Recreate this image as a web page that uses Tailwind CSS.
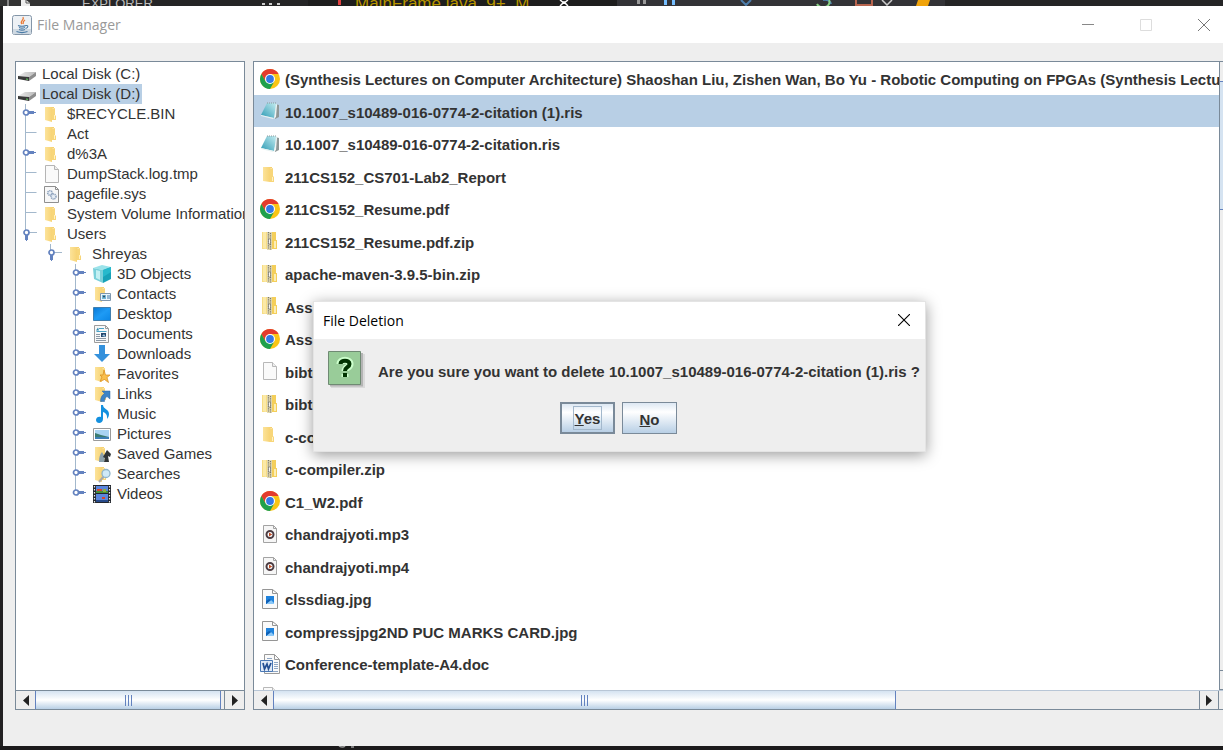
<!DOCTYPE html>
<html lang="en">
<head>
<meta charset="utf-8">
<title>File Manager</title>
<script src="https://cdn.jsdelivr.net/npm/@tailwindcss/browser@4"></script>
</head>
<body class="flex h-screen flex-col overflow-hidden bg-[#222122] font-['Liberation_Sans',Arial,sans-serif] text-[15px] text-[#333333]">

<svg class="absolute size-0" aria-hidden="true">
  <defs>
    <linearGradient id="gf" x1="0" x2="1"><stop offset="0" stop-color="#fce39a"/><stop offset="1" stop-color="#f6cf6a"/></linearGradient>
    <linearGradient id="gd" x1="0" x2="1" y1="0" y2="1"><stop offset="0" stop-color="#0a78d4"/><stop offset=".5" stop-color="#1e9bf5"/><stop offset="1" stop-color="#0b86e6"/></linearGradient>
    <linearGradient id="gn" x1="1" x2="0" y1="0" y2="1"><stop offset="0" stop-color="#c8eef2"/><stop offset="1" stop-color="#2d9bb4"/></linearGradient>
    <linearGradient id="gk" x1="0" x2="1"><stop offset="0" stop-color="#ececec"/><stop offset="1" stop-color="#b9b9b9"/></linearGradient>
    <symbol id="folder" viewBox="0 0 18 18"><path d="M2 2h9v1l-2 1v13l-7-2z" fill="url(#gf)"/><path d="M9 4l3-1v7l1 1v4H9z" fill="#f8d679"/><path d="M11 10h1v4h-1z" fill="#fff1c2"/></symbol>
    <symbol id="disk" viewBox="0 0 18 18"><path d="M0 11l7-4h11l-7 5z" fill="url(#gk)"/><path d="M0 11l11 1v4L0 14z" fill="#3a3a3a"/><path d="M11 12l7-5v4l-7 5z" fill="#8d8d8d"/><path d="M8 14l2 .3" stroke="#5fd35f"/></symbol>
    <symbol id="page" viewBox="0 0 18 18"><path d="M2.500.500h9l4 4v13h-13z" fill="#fafafa" stroke="#b5b5b5"/><path d="M11.500.500v4h4" fill="#eee" stroke="#b5b5b5"/></symbol>
    <symbol id="sys" viewBox="0 0 18 18"><path d="M1.500 1.500h11l3 3v13h-14z" fill="#f7f7f7" stroke="#8f8f8f"/><path d="M12.500 1.500v3h3" fill="none" stroke="#8f8f8f"/><circle cx="7" cy="8" r="2.300" fill="#e6edf5" stroke="#8fa3bd" stroke-width="1.600" stroke-dasharray="1.200 .6"/><circle cx="10.500" cy="11.500" r="2.500" fill="#e6edf5" stroke="#8fa3bd" stroke-width="1.600" stroke-dasharray="1.200 .6"/></symbol>
    <symbol id="cube" viewBox="0 0 18 18"><path d="M0 3l9-3 9 2-8 3z" fill="#9be3ea"/><path d="M0 3l10 2v13L1 14z" fill="#7ad0da"/><path d="M10 5l8-3v12l-8 4z" fill="#17a2b8"/><path d="M3 5l4 1v9l-4-2z" fill="#c3f0f3"/><path d="M10 5l8-3v5l-8 5z" fill="#27b9cc"/></symbol>
    <symbol id="contacts" viewBox="0 0 18 18"><use href="#folder"/><path d="M7.500 8.500h10v7h-10z" fill="#eaf4fb" stroke="#7f97ad"/><path d="M9 10h4v4H9z" fill="#6fb7d8"/><circle cx="11" cy="11.500" r="1" fill="#345"/><path d="M14 11h3M14 13h3" stroke="#3c78a8"/></symbol>
    <symbol id="desktop" viewBox="0 0 18 18"><path d="M.5 2.500h17v13H.5z" fill="url(#gd)" stroke="#3f7fb0"/></symbol>
    <symbol id="documents" viewBox="0 0 18 18"><path d="M1.500.500h11l3 3v14h-14z" fill="#f8f8f8" stroke="#9c9c9c"/><path d="M12.500.500v3h3" fill="none" stroke="#9c9c9c"/><path d="M6 3.500h5M3.500 6.500h10" stroke="#4aa3c7"/><path d="M3 5.500l2-3 1 3z" fill="#2d88ad"/><path d="M3 9.500h4M3 11.500h4M3 13.500h10M3 15.500h10" stroke="#8b98a5"/><path d="M8 8h5v4H8z" fill="#25476e"/><path d="M9 11l2-2 2 3z" fill="#9fc7df"/></symbol>
    <symbol id="downloads" viewBox="0 0 18 18"><path d="M6 0h6v9h5l-8 8-8-8h5z" fill="#3591dc"/></symbol>
    <symbol id="favorites" viewBox="0 0 18 18"><use href="#folder"/><path d="M11 5l1.500 5h4.500l-3 2.500 1.500 5-4-3-4.500 2 2-4.500-2-2h3z" fill="#f9bf4d" stroke="#d98b1b" stroke-width=".7"/></symbol>
    <symbol id="links" viewBox="0 0 18 18"><use href="#folder"/><path d="M9 6h8v8l-3-2.500c-2 1-2.500 3-2.500 5H7.500c0-4 1.500-6.500 4-8z" fill="#3c84c6" stroke="#2a66a3" stroke-width=".5"/></symbol>
    <symbol id="music" viewBox="0 0 18 18"><path d="M8 0h2c0 4 6 4 6 9 0 2-1 4-2 5 .5-4-1-6-4-7v7c0 5-7 5-7 1 0-3 3-4 5-3z" fill="#1490df"/></symbol>
    <symbol id="pictures" viewBox="0 0 18 18"><path d="M.5 3.500h17v12H.5z" fill="#fff" stroke="#9a9a9a"/><path d="M2 5h14v9H2z" fill="#a9d4f2"/><path d="M2 8l6 2 8 2v2H2z" fill="#3b7c70"/><path d="M2 12h14v2H2z" fill="#3c7fb5"/></symbol>
    <symbol id="games" viewBox="0 0 18 18"><use href="#folder"/><path d="M9 7l3 5-1 5H6c0-5 1-8 3-10z" fill="#8ba0ab"/><path d="M14 5l4 4-1 3-2-1 1 6h-5l1-4-2-1z" fill="#2f3436"/></symbol>
    <symbol id="searches" viewBox="0 0 18 18"><use href="#folder"/><path d="M11 11l-5 6" stroke="#a9a9a9" stroke-width="2"/><circle cx="13" cy="8.500" r="4" fill="#cfe9f7" stroke="#8fb5cc" stroke-width="1.300"/></symbol>
    <symbol id="videos" viewBox="0 0 18 18"><path d="M0 0h18v18H0z" fill="#23272e"/><path d="M3 1h12v7H3zM3 9h12v8H3z" fill="#5b86dd"/><path d="M3 6h12v2H3z" fill="#44913a"/><path d="M4 4h5v2H4zM9 12h3v2H9z" fill="#d9452b"/><path d="M10 4h3v3h-3z" fill="#8fae3a"/><path d="M3 15h12v2H3z" fill="#274a8a"/><path d="M1.500 1v17M16.500 1v17" stroke="#e9e9e9" stroke-width="1.200" stroke-dasharray="1.500 1.500"/></symbol>
    <symbol id="chrome" viewBox="0 0 20 20"><circle cx="10" cy="10" r="10" fill="#f9c515"/><path d="M1.340 5A10 10 0 0 1 18.660 5H10L5.670 12.500z" fill="#e33b2e"/><path d="M1.340 5A10 10 0 0 0 10 20l4.330-7.500L10 10l-4.330 2.500z" fill="#1fa04d"/><circle cx="10" cy="10" r="5" fill="#fff"/><circle cx="10" cy="10" r="3.900" fill="#3478e5"/></symbol>
    <symbol id="note" viewBox="0 0 20 20"><path d="M15 3l4 1v12l-4 2z" fill="#8f9796"/><path d="M7 2h8l2 1-3 14-13-3z" fill="url(#gn)"/><path d="M16 3l1 1-1 12-2 2z" fill="#eef4f4"/><path d="M1 14l13 3-1 1-12-3z" fill="#e8f2f2"/><path d="M7 2h9" stroke="#8d9a9c" stroke-dasharray="1 1"/></symbol>
    <symbol id="zip" viewBox="0 0 20 20"><path d="M2 1h6v17H2z" fill="#f7dc82"/><path d="M3 1h3v17l-3-1z" fill="#fbe9a8"/><path d="M12 1h4v8h1v9h-5z" fill="#f4cf5b"/><path d="M14 10h2v7h-2z" fill="#fcedb5"/><path d="M7 1h5v18H7z" fill="#e2d9b0"/><path d="M8.500 1v17M10.500 2v17" stroke="#7c796b" stroke-width="1.200" stroke-dasharray="1.200 1"/><path d="M8.500 8h2v5h-2z" fill="#f4f4f4" stroke="#66645c" stroke-width=".6"/></symbol>
    <symbol id="lfolder" viewBox="0 0 20 20"><path d="M3 1h9v1l-2 1v13l-7-1z" fill="url(#gf)"/><path d="M10 3l3-1v8l1 1v5h-4z" fill="#f8d679"/><path d="M12 11h1v4h-1z" fill="#fff1c2"/></symbol>
    <symbol id="lpage" viewBox="0 0 20 20"><path d="M3.500 1.500h9l4 4v13h-13z" fill="#fafafa" stroke="#b8b8b8"/><path d="M12.500 1.500v4h4" fill="#eee" stroke="#b8b8b8"/></symbol>
    <symbol id="media" viewBox="0 0 20 20"><path d="M3.500 1.500h10l3 3v14h-13z" fill="#f6f6f6" stroke="#a3a3a3"/><path d="M13.500 1.500v3h3" fill="none" stroke="#a3a3a3"/><circle cx="10" cy="10.500" r="3.500" fill="#fff" stroke="#4c3d43" stroke-width="2"/><path d="M9 8.500l3.200 2-3.200 2z" fill="#c04b23"/></symbol>
    <symbol id="jpg" viewBox="0 0 20 20"><path d="M2.500.500h10l5 4v15h-15z" fill="#fafafa" stroke="#959595"/><path d="M12.500.500v4h5" fill="none" stroke="#959595"/><path d="M6 7h8v8H6z" fill="#1f82dc"/><path d="M6 15l5-4 3 3v1z" fill="#8cc8f7"/><path d="M6 12l3-2 2 1-5 4z" fill="#0e5fb5"/></symbol>
    <symbol id="doc" viewBox="0 0 20 20"><path d="M4.500.500h10l5 5v14h-15z" fill="#fafafa" stroke="#9a9a9a"/><path d="M14.500.500v5h5" fill="none" stroke="#9a9a9a"/><path d="M7 4.500h5M14 8.500h4M14 10.500h4M14 12.500h4M14 14.500h4M9 17.500h9" stroke="#8ea6c4"/><path d="M.5 6.500h12v11H.5z" fill="#dfe9f6" stroke="#4b79b5"/><path d="M3 9l1.500 6L7 10l1.500 5L11 9" fill="none" stroke="#234f93" stroke-width="1.700"/></symbol>
    <!-- tree handles and connector lines -->
    <symbol id="line" viewBox="0 0 25 20"><path d="M9.500 0v20M9.500 8.500h11" stroke="#a3b8cc" fill="none"/></symbol>
    <symbol id="closed" viewBox="0 0 25 20"><path d="M9.500 0v20" stroke="#a3b8cc"/><path d="M13 8h7v1h-7z" fill="#6382bf"/><path d="M13 7h5v3h-5z" fill="#6382bf"/><circle cx="10" cy="8.500" r="2.500" fill="#fff" stroke="#6382bf" stroke-width="1.700"/></symbol>
    <symbol id="closedlast" viewBox="0 0 25 20"><path d="M9.500 0v8" stroke="#a3b8cc"/><path d="M13 8h7v1h-7z" fill="#6382bf"/><path d="M13 7h5v3h-5z" fill="#6382bf"/><circle cx="10" cy="8.500" r="2.500" fill="#fff" stroke="#6382bf" stroke-width="1.700"/></symbol>
    <symbol id="open" viewBox="0 0 25 20"><path d="M9.500 0v9M10 8.500h11" stroke="#a3b8cc"/><path d="M9 11h3v5H9z" fill="#6382bf"/><path d="M10 16h1v1h-1z" fill="#6382bf"/><circle cx="10.500" cy="8.500" r="2.500" fill="#fff" stroke="#6382bf" stroke-width="1.700"/></symbol>
  </defs>
</svg>

<!-- editor window peeking out above -->
<div class="flex h-1.5 shrink-0 overflow-hidden bg-[#252526] whitespace-nowrap" aria-hidden="true">
  <svg class="h-1.5 w-[82px] shrink-0" viewBox="0 0 82 6"><path d="M0 0h50v6H0z" fill="#333333"/><path d="M8 0v6" stroke="#ddd"/><path d="M21 0h5l4 3v3h-9z" fill="#eee"/><path d="M26 0v3h4" fill="none" stroke="#555"/></svg>
  <span class="-mt-1 w-[178px] shrink-0 text-[13px] leading-4 text-[#bbbbbb]">EXPLORER</span>
  <svg class="h-1.5 w-[95px] shrink-0" viewBox="0 0 95 6"><path d="M48 0h47v6H48z" fill="#1e1e1e"/><path d="M2 3h3v2H2zM9 3h3v2H9zM17 3h3v2h-3z" fill="#ccc"/><path d="M78 0h3v5h-3z" fill="#e04040"/></svg>
  <span class="-mt-1 w-[200px] shrink-0 bg-[#1e1e1e] text-[17px] leading-4 text-[#b89500]">MainFrame.java&nbsp; 9+, M</span>
  <svg class="h-1.5 w-[400px] shrink-0" viewBox="0 0 400 6"><path d="M0 0h390v6H0z" fill="#333337"/><path d="M0 0h62v6H0z" fill="#1e1e1e"/><path d="M5 6l4-4 4 4M5 0l4 3 4-3" fill="none" stroke="#fff" stroke-width="1.500"/><path d="M82 0h3v4h-3zM88 0h3v4h-3z" fill="#999"/><path d="M109 0h3v5h-3zM117 0h3v5h-3z" fill="#75beff"/><path d="M186 0l5 5 5-5M268 0a6 5 0 0 1 8 4" fill="none" stroke="#4d7dab" stroke-width="2"/><path d="M262 4a6 5 0 0 0 12-4" fill="none" stroke="#89d185" stroke-width="2"/><path d="M301 0v5h16V0" fill="none" stroke="#b8654f" stroke-width="2"/><path d="M327 0l5 5 5-5" fill="none" stroke="#ccc" stroke-width="1.500"/><path d="M363 0h12l-2 6h-12z" fill="#f0a30a"/></svg>
</div>

<main class="ml-[3px] flex min-h-0 flex-1 flex-col bg-[#eeeeee]">
  <header class="flex h-[37px] shrink-0 items-center bg-white pl-[9px] font-['Open_Sans','Noto_Sans',sans-serif]">
    <svg class="size-5" viewBox="0 0 20 20"><rect x=".5" y=".5" width="19" height="19" rx="2" fill="#edf1f5" stroke="#8496a8"/><path d="M1 14h18v5H1z" fill="#cfd9e2"/><path d="M11 2c2 3-4 4-1 7M13 5c-3 2-1 2-2 4" fill="none" stroke="#ea7b38" stroke-width="1.300"/><path d="M6 10.500c2 .8 6 .8 8 0M7 12.500c2 .8 4 .8 6 0M7 14.500c2 .8 4 .8 6 0M4.500 16.500c3 1.200 8 1.200 11 0M14 10.500c2.500-.5 2.500 2-.5 3" fill="none" stroke="#4a7ba6" stroke-width="1.100"/></svg>
    <h1 class="flex-1 pl-[5px] text-[14px] text-[#999999]">File Manager</h1>
    <button class="flex h-full w-[58px] items-center justify-center" aria-label="Minimize"><svg class="size-3" viewBox="0 0 12 12"><path d="M0 5.500h12" stroke="#888"/></svg></button>
    <button class="flex h-full w-[58px] items-center justify-center" aria-label="Maximize" disabled><svg class="size-3" viewBox="0 0 12 12"><path d="M.5.500h11v11H.5z" fill="none" stroke="#dddddd"/></svg></button>
    <button class="flex h-full w-12 items-center justify-center pl-2.5" aria-label="Close"><svg class="size-3.5" viewBox="0 0 14 14"><path d="M1 1l12 12M13 1L1 13" stroke="#777" /></svg></button>
  </header>

  <div class="flex min-h-0 flex-1 gap-2 pt-[18px] pb-9 pl-3">
    <!-- folder tree -->
    <nav class="flex w-[230px] shrink-0 flex-col border border-[#7a8a99] bg-white" aria-label="Folders">
      <ul class="min-h-0 flex-1 overflow-hidden pt-0.5 whitespace-nowrap [&>li]:flex [&>li]:h-5 [&>li]:items-center">
        <li><svg class="ml-0.5 size-[18px] shrink-0"><use href="#disk"/></svg><span class="ml-1 px-0.5">Local Disk (C:)</span></li>
        <li><svg class="ml-0.5 size-[18px] shrink-0"><use href="#disk"/></svg><span class="ml-1 bg-[#b8cfe5] px-0.5 leading-5">Local Disk (D:)</span></li>
        <li><svg class="h-5 w-[25px] shrink-0"><use href="#closed"/></svg><svg class="ml-0.5 size-[18px] shrink-0"><use href="#folder"/></svg><span class="ml-1 px-0.5">$RECYCLE.BIN</span></li>
        <li><svg class="h-5 w-[25px] shrink-0"><use href="#line"/></svg><svg class="ml-0.5 size-[18px] shrink-0"><use href="#folder"/></svg><span class="ml-1 px-0.5">Act</span></li>
        <li><svg class="h-5 w-[25px] shrink-0"><use href="#closed"/></svg><svg class="ml-0.5 size-[18px] shrink-0"><use href="#folder"/></svg><span class="ml-1 px-0.5">d%3A</span></li>
        <li><svg class="h-5 w-[25px] shrink-0"><use href="#line"/></svg><svg class="ml-0.5 size-[18px] shrink-0"><use href="#page"/></svg><span class="ml-1 px-0.5">DumpStack.log.tmp</span></li>
        <li><svg class="h-5 w-[25px] shrink-0"><use href="#line"/></svg><svg class="ml-0.5 size-[18px] shrink-0"><use href="#sys"/></svg><span class="ml-1 px-0.5">pagefile.sys</span></li>
        <li><svg class="h-5 w-[25px] shrink-0"><use href="#line"/></svg><svg class="ml-0.5 size-[18px] shrink-0"><use href="#folder"/></svg><span class="ml-1 px-0.5">System Volume Information</span></li>
        <li><svg class="h-5 w-[25px] shrink-0"><use href="#open"/></svg><svg class="ml-0.5 size-[18px] shrink-0"><use href="#folder"/></svg><span class="ml-1 px-0.5">Users</span></li>
        <li class="pl-[25px]"><svg class="h-5 w-[25px] shrink-0"><use href="#open"/></svg><svg class="ml-0.5 size-[18px] shrink-0"><use href="#folder"/></svg><span class="ml-1 px-0.5">Shreyas</span></li>
        <li class="pl-[50px]"><svg class="h-5 w-[25px] shrink-0"><use href="#closed"/></svg><svg class="ml-0.5 size-[18px] shrink-0"><use href="#cube"/></svg><span class="ml-1 px-0.5">3D Objects</span></li>
        <li class="pl-[50px]"><svg class="h-5 w-[25px] shrink-0"><use href="#closed"/></svg><svg class="ml-0.5 size-[18px] shrink-0"><use href="#contacts"/></svg><span class="ml-1 px-0.5">Contacts</span></li>
        <li class="pl-[50px]"><svg class="h-5 w-[25px] shrink-0"><use href="#closed"/></svg><svg class="ml-0.5 size-[18px] shrink-0"><use href="#desktop"/></svg><span class="ml-1 px-0.5">Desktop</span></li>
        <li class="pl-[50px]"><svg class="h-5 w-[25px] shrink-0"><use href="#closed"/></svg><svg class="ml-0.5 size-[18px] shrink-0"><use href="#documents"/></svg><span class="ml-1 px-0.5">Documents</span></li>
        <li class="pl-[50px]"><svg class="h-5 w-[25px] shrink-0"><use href="#closed"/></svg><svg class="ml-0.5 size-[18px] shrink-0"><use href="#downloads"/></svg><span class="ml-1 px-0.5">Downloads</span></li>
        <li class="pl-[50px]"><svg class="h-5 w-[25px] shrink-0"><use href="#closed"/></svg><svg class="ml-0.5 size-[18px] shrink-0"><use href="#favorites"/></svg><span class="ml-1 px-0.5">Favorites</span></li>
        <li class="pl-[50px]"><svg class="h-5 w-[25px] shrink-0"><use href="#closed"/></svg><svg class="ml-0.5 size-[18px] shrink-0"><use href="#links"/></svg><span class="ml-1 px-0.5">Links</span></li>
        <li class="pl-[50px]"><svg class="h-5 w-[25px] shrink-0"><use href="#closed"/></svg><svg class="ml-0.5 size-[18px] shrink-0"><use href="#music"/></svg><span class="ml-1 px-0.5">Music</span></li>
        <li class="pl-[50px]"><svg class="h-5 w-[25px] shrink-0"><use href="#closed"/></svg><svg class="ml-0.5 size-[18px] shrink-0"><use href="#pictures"/></svg><span class="ml-1 px-0.5">Pictures</span></li>
        <li class="pl-[50px]"><svg class="h-5 w-[25px] shrink-0"><use href="#closed"/></svg><svg class="ml-0.5 size-[18px] shrink-0"><use href="#games"/></svg><span class="ml-1 px-0.5">Saved Games</span></li>
        <li class="pl-[50px]"><svg class="h-5 w-[25px] shrink-0"><use href="#closed"/></svg><svg class="ml-0.5 size-[18px] shrink-0"><use href="#searches"/></svg><span class="ml-1 px-0.5">Searches</span></li>
        <li class="pl-[50px]"><svg class="h-5 w-[25px] shrink-0"><use href="#closedlast"/></svg><svg class="ml-0.5 size-[18px] shrink-0"><use href="#videos"/></svg><span class="ml-1 px-0.5">Videos</span></li>
      </ul>
      <div class="flex h-[19px] shrink-0 border-t border-[#7a8a99] bg-[#eeeeee]">
        <button class="flex w-[19px] items-center justify-center" aria-label="Scroll left"><svg class="h-[11px] w-1.5" viewBox="0 0 6 11"><path d="M6 0v11L0 5.500z" fill="#222"/></svg></button>
        <div class="flex flex-1 pr-[3px]">
          <div class="flex flex-1 items-center justify-center gap-0.5 border-x border-[#6382bf] bg-linear-to-b from-[#d5e3f1] via-white to-[#b8cfe5]"><i class="h-[11px] w-px bg-[#6382bf]"></i><i class="h-[11px] w-px bg-[#6382bf]"></i><i class="h-[11px] w-px bg-[#6382bf]"></i></div>
        </div>
        <button class="flex w-5 items-center justify-center border-l border-[#7a8a99]" aria-label="Scroll right"><svg class="h-[11px] w-1.5" viewBox="0 0 6 11"><path d="M0 0v11l6-5.500z" fill="#222"/></svg></button>
      </div>
    </nav>

    <!-- file list -->
    <section class="flex min-w-0 flex-1 flex-col border-y border-l border-[#7a8a99] bg-white" aria-label="Files">
      <div class="flex min-h-0 flex-1">
        <ul class="min-w-0 flex-1 overflow-hidden font-bold whitespace-nowrap [&>li]:flex [&>li]:items-center [&>li]:gap-[5px] [&>li]:pl-1.5 [&>li:nth-child(odd)]:h-[33px] [&>li:nth-child(even)]:h-8">
          <li><svg class="size-5 shrink-0"><use href="#chrome"/></svg><span class="pt-1">(Synthesis Lectures on Computer Architecture) Shaoshan Liu, Zishen Wan, Bo Yu - Robotic Computing on FPGAs (Synthesis Lectures</span></li>
          <li class="bg-[#b8cfe5]"><svg class="size-5 shrink-0"><use href="#note"/></svg><span class="pt-1">10.1007_s10489-016-0774-2-citation (1).ris</span></li>
          <li><svg class="size-5 shrink-0"><use href="#note"/></svg><span class="pt-1">10.1007_s10489-016-0774-2-citation.ris</span></li>
          <li><svg class="size-5 shrink-0"><use href="#lfolder"/></svg><span class="pt-1">211CS152_CS701-Lab2_Report</span></li>
          <li><svg class="size-5 shrink-0"><use href="#chrome"/></svg><span class="pt-1">211CS152_Resume.pdf</span></li>
          <li><svg class="size-5 shrink-0"><use href="#zip"/></svg><span class="pt-1">211CS152_Resume.pdf.zip</span></li>
          <li><svg class="size-5 shrink-0"><use href="#zip"/></svg><span class="pt-1">apache-maven-3.9.5-bin.zip</span></li>
          <li><svg class="size-5 shrink-0"><use href="#zip"/></svg><span class="pt-1">Assi</span></li>
          <li><svg class="size-5 shrink-0"><use href="#chrome"/></svg><span class="pt-1">Assi</span></li>
          <li><svg class="size-5 shrink-0"><use href="#lpage"/></svg><span class="pt-1">bibte</span></li>
          <li><svg class="size-5 shrink-0"><use href="#zip"/></svg><span class="pt-1">bibte</span></li>
          <li><svg class="size-5 shrink-0"><use href="#lfolder"/></svg><span class="pt-1">c-co</span></li>
          <li><svg class="size-5 shrink-0"><use href="#zip"/></svg><span class="pt-1">c-compiler.zip</span></li>
          <li><svg class="size-5 shrink-0"><use href="#chrome"/></svg><span class="pt-1">C1_W2.pdf</span></li>
          <li><svg class="size-5 shrink-0"><use href="#media"/></svg><span class="pt-1">chandrajyoti.mp3</span></li>
          <li><svg class="size-5 shrink-0"><use href="#media"/></svg><span class="pt-1">chandrajyoti.mp4</span></li>
          <li><svg class="size-5 shrink-0"><use href="#jpg"/></svg><span class="pt-1">clssdiag.jpg</span></li>
          <li><svg class="size-5 shrink-0"><use href="#jpg"/></svg><span class="pt-1">compressjpg2ND PUC MARKS CARD.jpg</span></li>
          <li><svg class="size-5 shrink-0"><use href="#doc"/></svg><span class="pt-1">Conference-template-A4.doc</span></li>
          <li><svg class="size-5 shrink-0"><use href="#lpage"/></svg></li>
        </ul>
        <div class="flex w-1 shrink-0 flex-col border-l border-[#7a8a99] bg-[#eeeeee]">
          <div class="h-5 shrink-0 border-b border-[#6382bf]"></div>
          <div class="h-32 shrink-0 border-b border-[#6382bf] bg-[#d5e3f1]"></div>
          <div class="flex-1"></div>
          <div class="h-5 shrink-0 border-y border-[#7a8a99]"></div>
        </div>
      </div>
      <div class="flex h-[19px] shrink-0 border-t border-[#b8c6d6] bg-[#eeeeee]">
        <button class="flex w-[19px] items-center justify-center" aria-label="Scroll left"><svg class="h-[11px] w-1.5" viewBox="0 0 6 11"><path d="M6 0v11L0 5.500z" fill="#222"/></svg></button>
        <div class="flex flex-1">
          <div class="flex flex-[622] items-center justify-center gap-0.5 border-x border-[#6382bf] bg-linear-to-b from-[#d5e3f1] via-white to-[#b8cfe5]"><i class="h-[11px] w-px bg-[#6382bf]"></i><i class="h-[11px] w-px bg-[#6382bf]"></i><i class="h-[11px] w-px bg-[#6382bf]"></i></div>
          <div class="flex-[304]"></div>
        </div>
        <button class="mr-1 flex w-5 items-center justify-center border-x border-[#7a8a99]" aria-label="Scroll right"><svg class="h-[11px] w-1.5" viewBox="0 0 6 11"><path d="M0 0v11l6-5.500z" fill="#222"/></svg></button>
      </div>
    </section>
  </div>
</main>
<div class="h-1 shrink-0 overflow-hidden bg-[#1b1a1b]" aria-hidden="true"><svg class="ml-[337px] h-1 w-5" viewBox="0 0 20 4"><path d="M2 0q4 2 6 0M14 1h3" fill="none" stroke="#999" stroke-width="1.500"/></svg></div>

<div role="dialog" aria-labelledby="dlg-title" class="absolute top-[301px] left-[313px] w-[613px] border border-[#e4e4e4] bg-[#eeeeee] shadow-[0_3px_14px_rgba(0,0,0,0.4)]">
  <div class="flex h-[37px] items-center justify-between bg-white pr-3.5 pl-[9px] font-['Open_Sans','Noto_Sans',sans-serif]">
    <h2 id="dlg-title" class="text-[14px] text-black">File Deletion</h2>
    <button class="px-px pb-0.5" aria-label="Close dialog"><svg class="size-3" viewBox="0 0 12 12"><path d="M0 0l12 12M12 0L0 12" stroke="#000" stroke-width="1.100"/></svg></button>
  </div>
  <div class="flex items-center px-3.5 pt-3">
    <svg class="size-10 shrink-0" viewBox="0 0 40 40"><path d="M3 3h34v34H3z" fill="#dadada"/><path d="M2 2h33v33.500H2z" fill="#b4b4b4"/><path d="M.5.500h32v33H.5z" fill="#99cc99" stroke="#6f8a73"/><path d="M12 13c0-5 10-5 10 0 0 4-5 3-5 7M17 23v3" fill="none" stroke="#ccffcc" stroke-width="7"/><path d="M12.500 13c0-4.500 9-4.500 9 0 0 3.500-4.500 3-4.500 7" fill="none" stroke="#003300" stroke-width="4"/><path d="M15 22h4v4h-4z" fill="#003300"/></svg>
    <p class="pt-0.5 pl-2.5 font-bold whitespace-nowrap">Are you sure you want to delete 10.1007_s10489-016-0774-2-citation (1).ris ?</p>
  </div>
  <div class="flex justify-center gap-[7px] pt-[11px] pr-0.5 pb-[17px] font-bold">
    <button class="flex h-8 w-[55px] items-center justify-center border-2 border-[#7a8a99] bg-linear-to-b from-[#dde8f3] via-white via-30% to-[#b8cfe5]"><span class="border border-[#a3b8cc] px-px pt-0.5 leading-5"><u>Y</u>es</span></button>
    <button class="flex h-8 w-[55px] items-center justify-center border border-[#7a8a99] bg-linear-to-b from-[#dde8f3] via-white via-30% to-[#b8cfe5]"><span class="pt-1"><u>N</u>o</span></button>
  </div>
</div>
</body>
</html>
